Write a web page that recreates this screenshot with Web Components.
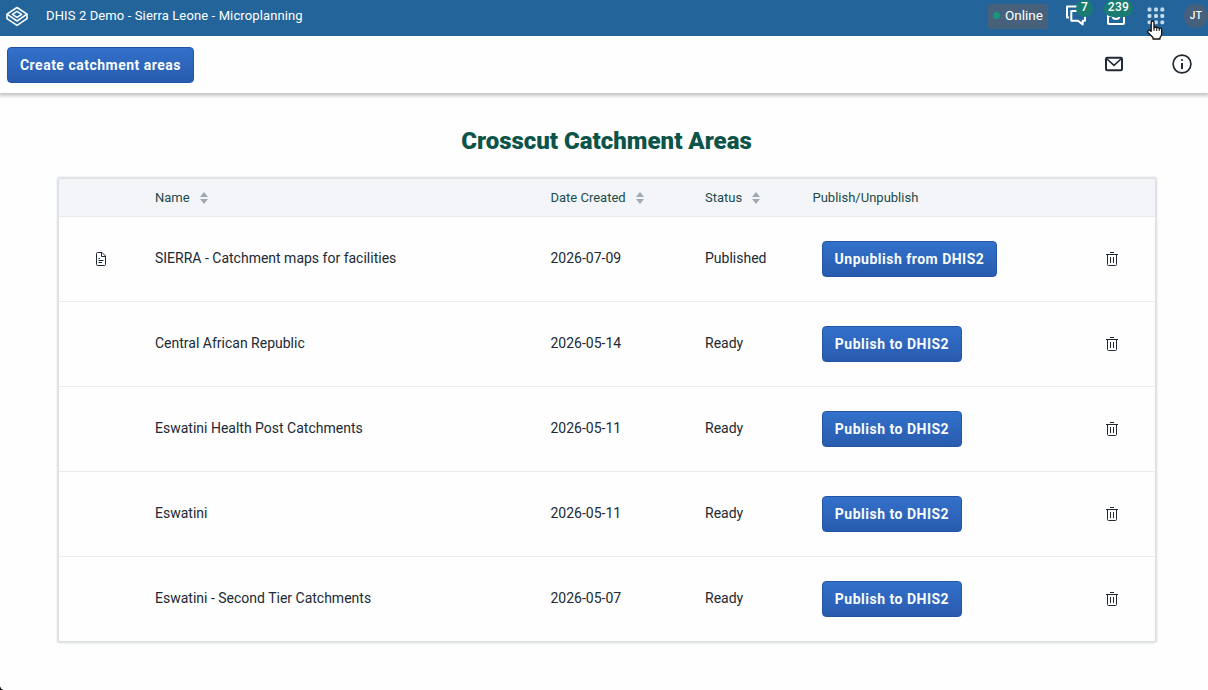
<!DOCTYPE html>
<html lang="en">
<head>
<meta charset="utf-8">
<title>Crosscut Catchment Areas</title>
<style>
html,body{margin:0;height:100%;overflow:hidden;background:#fdfefd;font-family:Roboto,sans-serif;color:#212934}
</style>
</head>
<body>
<catchment-app></catchment-app>
<script>
const define = (name, html, setup) => customElements.define(name, class extends HTMLElement {
  constructor() {
    super();
    const t = document.createElement('template');
    t.innerHTML = html;
    this.attachShadow({mode: 'open'}).append(t.content.cloneNode(true));
  }
  connectedCallback() { if (setup) setup(this, this.shadowRoot); }
});

const icons = {
  logo: [24, 22, `<g fill="none" stroke="#fff" stroke-width="1.6" stroke-linejoin="round"><path d="M12 1.5 22 8.2 12 15 2 8.2Z"/><path d="M12 5.4 16.6 8.4 12 11.4 7.4 8.4Z" stroke-width="1.4"/><path d="M22 8.2V12.6L12 19.4 2 12.6V8.2"/></g>`],
  chat: [22, 22, `<g fill="none" stroke="#fff" stroke-width="2" stroke-linejoin="round"><path d="M4 13.5H2V2.5H15.5V6"/><path d="M6.3 7H20V16.8H17.7V20.5L13 16.8H6.3Z"/></g>`],
  inbox: [20, 20, `<g fill="none" stroke="#fff" stroke-width="2"><rect x="2" y="2" width="16" height="16" rx="1"/><path d="M2 10H6.5Q7 13 10 13T13.5 10H18"/></g>`],
  apps: [18, 18, `<g fill="#c5d9ec">${[2.5, 9, 15.3].map(y => [2.5, 9, 15.3].map(x => `<rect x="${x - 1.9}" y="${y - 1.9}" width="3.8" height="3.8" rx="1.2"/>`).join('')).join('')}</g>`],
  mail: [20, 16, `<rect x="2" y="1.8" width="16" height="12.4" rx="1.2" fill="none" stroke="#212934" stroke-width="2"/><path d="m3 3 7 6.4L17 3" fill="none" stroke="#212934" stroke-width="1.6"/>`],
  info: [22, 22, `<circle cx="11" cy="11" r="8.9" fill="none" stroke="#212934" stroke-width="1.7"/><path d="M11 10v6" stroke="#212934" stroke-width="2"/><circle cx="11" cy="7" r="1.1" fill="#212934"/>`],
  file: [12, 15, `<g fill="none" stroke="#212934"><path d="M1.5 1.5Q1.5.5 2.5.5H7L10.5 4V12.5q0 1-1 1h-7q-1 0-1-1Z"/><path d="M6.5 1v3.5h4M3.5 6.5H5M3.5 8.5h5M3.5 10.5H7"/></g>`],
  trash: [12, 15, `<g fill="none" stroke="#212934"><path d="M4 .5h4M0 2.5h12M1.5 2.5V12.5q0 1 1 1h7q1 0 1-1V2.5M4.5 5v6M7.5 5v6"/></g>`],
  sort: [8, 12, `<path d="M4 0 8 5H0ZM0 7H8L4 12Z" fill="#a0a8b3"/>`],
  hand: [18, 20, `<path d="M5.2 11.3V2.7Q5.2 1 6.5 1T8 2.7V8q.3-1 1.3-1t1.4 1.2q.3-.8 1.2-.8T13.2 8.8q.3-.7 1.2-.7 1.3 0 1.3 1.6v4q0 2.2-1.7 3.7V19H7v-1.5L2.2 12.8Q1.2 11 2.4 10.2q1-.4 2 .7Z" fill="#fff" stroke="#111" stroke-width="1.3" stroke-linejoin="round"/><path d="M8 8v3M10.7 8.5V11M13.2 9v2" stroke="#111"/>`]
};
define('ui-icon', `<style>:host{display:block;flex:none;line-height:0}svg{display:block}</style>`, (el, root) => {
  const [w, h, body] = icons[el.getAttribute('name')];
  root.innerHTML += `<svg width="${w}" height="${h}" viewBox="0 0 ${w} ${h}">${body}</svg>`;
});

define('ui-button', `<style>
:host{display:inline-block}
button{display:flex;align-items:center;justify-content:center;box-sizing:border-box;width:100%;height:36px;margin:0;padding:0;
 border:1px solid #2255a4;border-radius:4px;background:linear-gradient(#3371cb,#285bae);color:#f8fcff;
 font:700 14px/18px Roboto,sans-serif;letter-spacing:.5px;white-space:nowrap}
</style><button><slot></slot></button>`);

define('ui-badge', `<style>
:host{position:absolute;box-sizing:border-box;height:17px;border-radius:9px;background:#187c70;color:#fff;
font-weight:500;font-size:12px;line-height:15px;letter-spacing:.3px;text-align:center}
</style><slot></slot>`);

define('header-bar', `<style>
:host{display:flex;align-items:center;box-sizing:border-box;height:36px;padding:0 0 4px 5px;background:#23659b;color:#fff;font-size:13px;position:relative;z-index:3}
.title{margin-left:17px;flex:1;letter-spacing:.12px;white-space:nowrap;line-height:16px;padding-bottom:1px}
.online{display:flex;align-items:center;box-sizing:border-box;width:60px;height:25px;line-height:16px;padding:0 0 2px 5px;gap:5px;border-radius:4px;background:#47617c;font-size:13.5px}
.online i{width:7px;height:7px;border-radius:50%;background:#139a7c}
.item{position:relative;width:22px}
.chat{margin:0 19px 0 17px}
.inbox{margin-right:19px}
.apps{width:18px;margin-right:19px}
.chat ui-badge{left:11px;top:-6px;width:17px}
.inbox ui-badge{left:-2px;top:-6px;width:29px}
.hand{position:absolute;left:-1px;top:13px}
.avatar{width:24px;height:24px;border-radius:50%;background:#465f7b;text-align:center;font:500 10px/24px Roboto,sans-serif;letter-spacing:.5px;flex:none}
.logo{position:relative;top:1px}.chat>ui-icon{margin-top:-2px}
</style>
<ui-icon class="logo" name="logo"></ui-icon><span class="title">DHIS 2 Demo - Sierra Leone - Microplanning</span>
<span class="online"><i></i>Online</span>
<span class="item chat"><ui-icon name="chat"></ui-icon><ui-badge>7</ui-badge></span>
<span class="item inbox"><ui-icon name="inbox"></ui-icon><ui-badge>239</ui-badge></span>
<span class="item apps"><ui-icon name="apps"></ui-icon><ui-icon class="hand" name="hand"></ui-icon></span>
<span class="avatar">JT</span>`);

define('tool-bar', `<style>
:host{display:flex;align-items:center;box-sizing:border-box;height:57px;padding:0 15px 0 7px;background:#fefefe;box-shadow:0 2px 3px 1px #c8c8c8;position:relative}
ui-button{width:187px}
ui-icon{padding-bottom:2px}
.mail{margin-left:auto;margin-right:47px}
</style><ui-button>Create catchment areas</ui-button><ui-icon class="mail" name="mail"></ui-icon><ui-icon name="info"></ui-icon>`);

const grid = 'display:grid;grid-template-columns:96px 395.5px 154.5px 107.5px 1fr 90px;align-items:center;';
define('table-head', `<style>
:host{${grid}height:38px;box-sizing:border-box;background:#f3f5f8;border-bottom:1px solid #e7ebef;font-size:13px;color:#1b4b4d}
span{display:flex;align-items:center;gap:10px}
</style><span></span><span>Name<ui-icon name="sort"></ui-icon></span><span>Date Created<ui-icon name="sort"></ui-icon></span><span>Status<ui-icon name="sort"></ui-icon></span><span>Publish/Unpublish</span><span></span>`);

define('table-row', `<style>
:host{${grid}height:85px;box-sizing:border-box;border-bottom:1px solid #e8edf2;font-size:14px;color:#212934}
:host(:last-child){border-bottom:0;height:84px}
.file{padding:0 0 0 36px}.text{line-height:16px;padding-bottom:2px}
ui-button{margin-left:9.5px;width:140px;vertical-align:top}
:host([published]) ui-button{width:175px}
.trash{padding-left:41px}
</style><span class="file"></span><span class="text"><slot></slot></span><span class="text date"></span><span class="text status"></span><span><ui-button></ui-button></span><span class="trash"><ui-icon name="trash"></ui-icon></span>`, (el, root) => {
  const on = el.hasAttribute('published');
  if (on) root.querySelector('.file').innerHTML = '<ui-icon name="file"></ui-icon>';
  root.querySelector('.date').textContent = el.getAttribute('date');
  root.querySelector('.status').textContent = on ? 'Published' : 'Ready';
  root.querySelector('ui-button').textContent = on ? 'Unpublish from DHIS2' : 'Publish to DHIS2';
});

define('catchment-table', `<style>
:host{display:block;margin:0 53px 0 59px;background:#fdfefd;box-shadow:0 0 0 1px #dcdfe3,0 0 2px 2px #d9dcdf;border-radius:1px}
</style><table-head></table-head><slot></slot>`);

define('catchment-app', `<style>
:host{display:block;height:690px;overflow:hidden;position:relative}
h1{margin:0;padding:33px 0 22px 5px;text-align:center;font:900 24px/31px Roboto,sans-serif;color:#0c5349}
.corner{position:absolute;left:0;bottom:0;width:4px;height:4px;background:radial-gradient(circle at 100% 0,transparent 3.5px,#111 4px)}
</style>
<header-bar></header-bar><tool-bar></tool-bar>
<h1>Crosscut Catchment Areas</h1>
<catchment-table>
<table-row published date="2026-07-09">SIERRA - Catchment maps for facilities</table-row>
<table-row date="2026-05-14">Central African Republic</table-row>
<table-row date="2026-05-11">Eswatini Health Post Catchments</table-row>
<table-row date="2026-05-11">Eswatini</table-row>
<table-row date="2026-05-07">Eswatini - Second Tier Catchments</table-row>
</catchment-table><div class="corner"></div>`);
</script>
</body>
</html>
